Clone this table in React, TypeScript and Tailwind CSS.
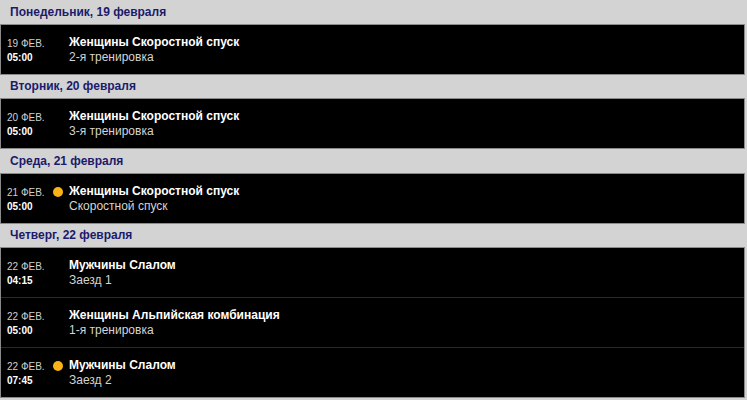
import React from 'react';

type Event = {
  date: string;
  time: string;
  title: string;
  sub: string;
  live?: boolean;
};

type Day = {
  label: string;
  events: Event[];
};

const days: Day[] = [
  {
    label: 'Понедельник, 19 февраля',
    events: [{ date: '19 ФЕВ.', time: '05:00', title: 'Женщины Скоростной спуск', sub: '2-я тренировка' }],
  },
  {
    label: 'Вторник, 20 февраля',
    events: [{ date: '20 ФЕВ.', time: '05:00', title: 'Женщины Скоростной спуск', sub: '3-я тренировка' }],
  },
  {
    label: 'Среда, 21 февраля',
    events: [{ date: '21 ФЕВ.', time: '05:00', title: 'Женщины Скоростной спуск', sub: 'Скоростной спуск', live: true }],
  },
  {
    label: 'Четверг, 22 февраля',
    events: [
      { date: '22 ФЕВ.', time: '04:15', title: 'Мужчины Слалом', sub: 'Заезд 1' },
      { date: '22 ФЕВ.', time: '05:00', title: 'Женщины Альпийская комбинация', sub: '1-я тренировка' },
      { date: '22 ФЕВ.', time: '07:45', title: 'Мужчины Слалом', sub: 'Заезд 2', live: true },
    ],
  },
];

const EventRow: React.FC<{ e: Event; first: boolean }> = ({ e, first }) => (
  <div className={`h-[49px] flex items-center ${first ? '' : 'border-t border-[#2a2a2a] h-[50px]'}`}>
    <div className="w-[48px] pl-[6px] flex flex-col gap-[1px] shrink-0 pt-[2px]">
      <span className="text-[10px] leading-[13px] text-[#d0d0d0]">{e.date}</span>
      <span className="text-[10px] leading-[13px] font-bold text-white">{e.time}</span>
    </div>
    <div className="w-[20px] shrink-0 flex justify-start pl-[4px] -mt-[13px]">
      {e.live && <span className="block w-[10px] h-[10px] rounded-full bg-[#fbb216]" />}
    </div>
    <div className="flex flex-col pt-[1px]">
      <span className="text-[12px] leading-[15px] font-bold text-white">{e.title}</span>
      <span className="text-[12px] leading-[15px] text-[#d4d4d4]">{e.sub}</span>
    </div>
  </div>
);

export default function App() {
  return (
    <div
      className="w-[747px] h-[400px] bg-[#d3d3d3] overflow-hidden pr-[2px]"
      style={{ fontFamily: '"Liberation Sans", Arial, sans-serif' }}
    >
      {days.map((d) => (
        <div key={d.label}>
          <div className="h-[23.5px] flex items-center pl-[10px] text-[12px] font-bold text-[#1b1b6b]">{d.label}</div>
          <div className="bg-black border border-[#8a8a8a]">
            {d.events.map((e, i) => (
              <EventRow key={i} e={e} first={i === 0} />
            ))}
          </div>
        </div>
      ))}
    </div>
  );
}
